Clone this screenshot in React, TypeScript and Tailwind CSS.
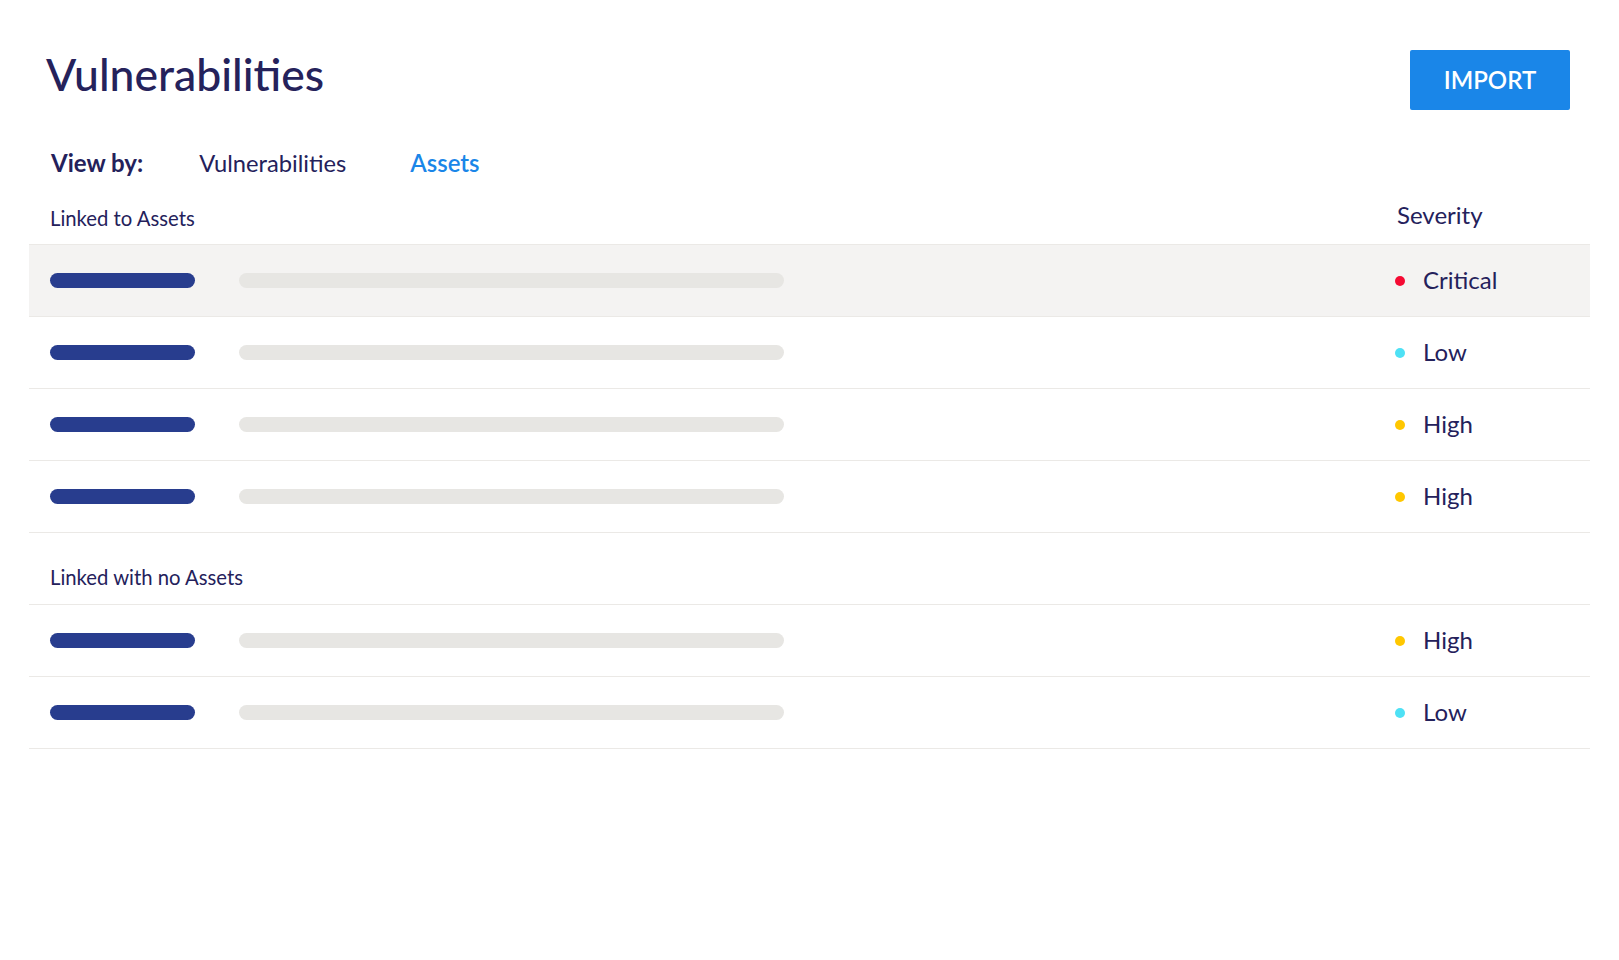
import { type ReactNode } from "react";

type Severity = "Critical" | "High" | "Low";

const dotColor: Record<Severity, string> = {
  Critical: "bg-[#f50a33]",
  High: "bg-[#ffc700]",
  Low: "bg-[#4ee1f5]",
};

const linked: Severity[] = ["Critical", "Low", "High", "High"];
const unlinked: Severity[] = ["High", "Low"];

function Row({ severity, active }: { severity: Severity; active?: boolean }) {
  return (
    <div
      className={`flex h-[72px] items-center border-b border-[#ebe9e6] pl-[21px] ${
        active ? "bg-[#f4f3f2]" : "bg-white"
      }`}
    >
      <div className="h-[15px] w-[145px] rounded-full bg-[#283d8e]" />
      <div className="ml-[44px] h-[15px] w-[545px] rounded-full bg-[#e7e6e3]" />
      <div className="flex-1" />
      <div className="flex w-[195px] items-center">
        <span className={`size-[10px] rounded-full ${dotColor[severity]}`} />
        <span className="ml-[18px] pb-[2px] text-[24px] leading-[29px] text-[#24215b]">
          {severity}
        </span>
      </div>
    </div>
  );
}

function SectionHeader({
  children,
  right,
  pb,
}: {
  children: ReactNode;
  right?: ReactNode;
  pb: string;
}) {
  return (
    <div className={`flex h-[72px] items-end border-b border-[#ebe9e6] pl-[21px] ${pb}`}>
      <span className="flex-1 text-[20.3px] leading-[24px] text-[#24215b]">{children}</span>
      {right}
    </div>
  );
}

export default function App() {
  return (
    <div
      className="min-h-screen bg-white px-[29px] pt-[48px] text-[#24215b]"
      style={{ fontFamily: "Lato, 'Open Sans', sans-serif" }}
    >
      <div className="flex h-[62px] items-start justify-between">
        <h1 className="mt-[2px] pl-[17px] text-[44.5px] font-medium leading-[48px] text-[#25225b]">
          Vulnerabilities
        </h1>
        <button className="mr-[20px] mt-[2px] h-[60px] w-[160px] rounded-[2px] bg-[#1a86e8] text-[24px] font-semibold text-white">
          IMPORT
        </button>
      </div>

      <div className="mt-[40px] flex items-center pl-[22px] text-[24px] leading-[26px]">
        <span className="font-bold">View by:</span>
        <button className="ml-[56px] text-[23.7px]">Vulnerabilities</button>
        <button className="ml-[64px] text-[24px] font-semibold text-[#1a86e8]">Assets</button>
      </div>

      <div className="-mt-[3px]">
        <SectionHeader
          pb="pb-[14px]"
          right={
            <span className="mb-[1px] w-[195px] pl-[2px] text-[24px] leading-[29px]">Severity</span>
          }
        >
          Linked to Assets
        </SectionHeader>
        {linked.map((s, i) => (
          <Row key={i} severity={s} active={i === 0} />
        ))}
        <SectionHeader pb="pb-[15px]">Linked with no Assets</SectionHeader>
        {unlinked.map((s, i) => (
          <Row key={i} severity={s} />
        ))}
      </div>
    </div>
  );
}
